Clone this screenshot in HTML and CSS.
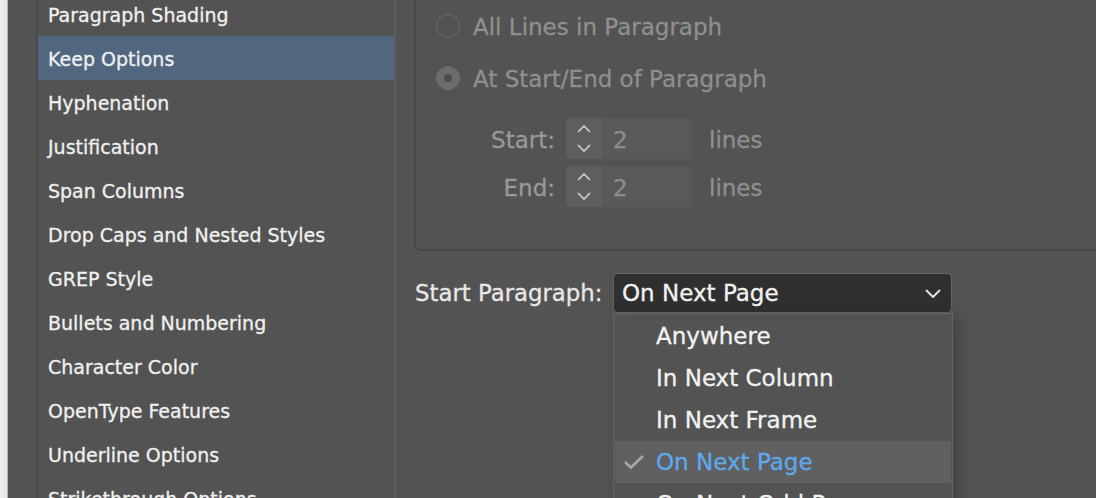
FILE: index.html
```html
<!DOCTYPE html>
<html>
<head>
<meta charset="utf-8">
<link rel="stylesheet" href="styles.css">
</head>
<body>
<div class="window">
  <div class="edge"></div>
  <div class="gutter"></div>
  <div class="list">
    <ul class="cats">
      <li>Paragraph Shading</li>
      <li class="sel">Keep Options</li>
      <li>Hyphenation</li>
      <li>Justification</li>
      <li>Span Columns</li>
      <li>Drop Caps and Nested Styles</li>
      <li>GREP Style</li>
      <li>Bullets and Numbering</li>
      <li>Character Color</li>
      <li>OpenType Features</li>
      <li>Underline Options</li>
      <li>Strikethrough Options</li>
    </ul>
  </div>
  <div class="main">
    <div class="group">
      <div class="radio-row">
        <span class="radio"></span>
        <span class="dim">All Lines in Paragraph</span>
      </div>
      <div class="radio-row">
        <span class="radio on"></span>
        <span class="dim">At Start/End of Paragraph</span>
      </div>
      <div class="spins">
        <div class="spin-row">
          <span class="spin-label">Start:</span>
          <div class="spinner">
            <span class="spin-btn">
              <svg width="16" height="30" viewBox="0 0 16 30"><polyline points="2,8 8,2 14,8" fill="none" stroke="#cfcfcf" stroke-width="1.6"/><polyline points="2,21 8,27 14,21" fill="none" stroke="#cfcfcf" stroke-width="1.6"/></svg>
            </span>
            <span class="spin-val">2</span>
          </div>
          <span class="dim">lines</span>
        </div>
        <div class="spin-row">
          <span class="spin-label">End:</span>
          <div class="spinner">
            <span class="spin-btn">
              <svg width="16" height="30" viewBox="0 0 16 30"><polyline points="2,8 8,2 14,8" fill="none" stroke="#cfcfcf" stroke-width="1.6"/><polyline points="2,21 8,27 14,21" fill="none" stroke="#cfcfcf" stroke-width="1.6"/></svg>
            </span>
            <span class="spin-val">2</span>
          </div>
          <span class="dim">lines</span>
        </div>
      </div>
    </div>
    <div class="start-row">
      <span class="start-label">Start Paragraph:</span>
      <div class="select-wrap">
        <div class="select">
          <span>On Next Page</span>
          <svg class="chev" width="16" height="9" viewBox="0 0 16 9"><polyline points="1,1 8,8 15,1" fill="none" stroke="#e2e2e2" stroke-width="2"/></svg>
        </div>
        <ul class="menu">
          <li>Anywhere</li>
          <li>In Next Column</li>
          <li>In Next Frame</li>
          <li class="cur"><svg class="check" width="20" height="14" viewBox="0 0 20 14"><polyline points="1,7 7,12.5 19,1" fill="none" stroke="#a9a9a9" stroke-width="2.6"/></svg>On Next Page</li>
          <li>On Next Odd Page</li>
        </ul>
      </div>
    </div>
  </div>
</div>
</body>
</html>
```
FILE: styles.css
```css
html, body {
  margin: 0;
  padding: 0;
}
body {
  width: 1096px;
  height: 498px;
  overflow: hidden;
  background: #535353;
  font-family: "DejaVu Sans", sans-serif;
  -webkit-text-stroke: 0.3px currentColor;
}
.window {
  display: flex;
  height: 498px;
}
.edge {
  width: 7px;
  background: linear-gradient(to right, #f0f0f0, #e4e4e4);
  border-right: 1px solid #b9b9b9;
}
.gutter {
  width: 28px;
  background: #535353;
  border-right: 2px solid #4a4a4a;
}
.list {
  width: 356px;
  background: #535353;
  border-right: 2px solid #5d5d5d;
  overflow: hidden;
}
.cats {
  list-style: none;
  margin: -8px 0 0 0;
  padding: 0;
}
.cats li {
  height: 44px;
  line-height: 46px;
  padding-left: 10px;
  font-size: 19px;
  color: #f0f0f0;
  white-space: nowrap;
}
.cats li.sel {
  background: #51677f;
}
.main {
  flex: 1;
  padding-left: 18px;
  display: flex;
  flex-direction: column;
}
.group {
  height: 249px;
  border-left: 2px solid #474747;
  border-bottom: 2px solid #474747;
  border-bottom-left-radius: 7px;
  padding-left: 20px;
  padding-top: 1px;
  box-sizing: border-box;
  height: 251px;
  display: flex;
  flex-direction: column;
  gap: 2px;
}
.radio-row {
  height: 50px;
  display: flex;
  align-items: center;
  gap: 13px;
}
.dim {
  color: #8f8f8f;
  font-size: 23px;
  padding-top: 2px;
}
.radio {
  width: 22px;
  height: 22px;
  border: 1.8px solid #6c6c6c;
  border-radius: 50%;
  box-sizing: content-box;
  display: flex;
  align-items: center;
  justify-content: center;
}
.radio.on {
  background: #6c6c6c;
}
.radio.on::after {
  content: "";
  width: 8px;
  height: 8px;
  border-radius: 50%;
  background: #4e4e4e;
}
.spins {
  margin-top: 13px;
  display: flex;
  flex-direction: column;
  gap: 7px;
}
.spin-row {
  display: flex;
  align-items: center;
  height: 41px;
}
.spin-label {
  width: 119px;
  text-align: right;
  font-size: 23px;
  color: #999;
  margin-right: 11px;
  padding-top: 2px;
}
.spinner {
  width: 126px;
  height: 41px;
  background: #595959;
  border-radius: 5px;
  display: flex;
  align-items: center;
  margin-right: 17px;
  overflow: hidden;
}
.spin-btn {
  width: 36px;
  height: 41px;
  background: #5e5e5e;
  display: flex;
  align-items: center;
  justify-content: center;
}
.spin-val {
  padding-left: 11px;
  padding-top: 2px;
  font-size: 23px;
  color: #8c8c8c;
}
.start-row {
  margin-top: 22px;
  display: flex;
  align-items: center;
  height: 40px;
}
.start-label {
  width: 198px;
  padding-left: 1px;
  font-size: 22.8px;
  color: #e8e8e8;
  white-space: nowrap;
}
.select-wrap {
  position: relative;
}
.select {
  width: 339px;
  height: 40px;
  box-sizing: border-box;
  background: #2f2f2f;
  border: 1.5px solid #646464;
  border-radius: 5px;
  display: flex;
  align-items: center;
  justify-content: space-between;
  padding: 0 10px 0 8px;
  font-size: 23px;
  color: #f2f2f2;
}
.chev {
  display: block;
}
.menu {
  position: absolute;
  top: 40px;
  left: 0;
  width: 340px;
  box-sizing: border-box;
  margin: 0;
  padding: 1px 1px 0 1px;
  list-style: none;
  background: #535353;
  border: 1.5px solid #646464;
  border-bottom: none;
  box-shadow: 6px 4px 14px rgba(0, 0, 0, 0.22);
}
.menu li {
  position: relative;
  height: 42px;
  line-height: 42px;
  padding-left: 41px;
  font-size: 23px;
  color: #f2f2f2;
  white-space: nowrap;
}
.menu li.cur {
  background: #606060;
  color: #5ea9ec;
}
.check {
  position: absolute;
  left: 9px;
  top: 14px;
  -webkit-text-stroke: 0;
}
```
